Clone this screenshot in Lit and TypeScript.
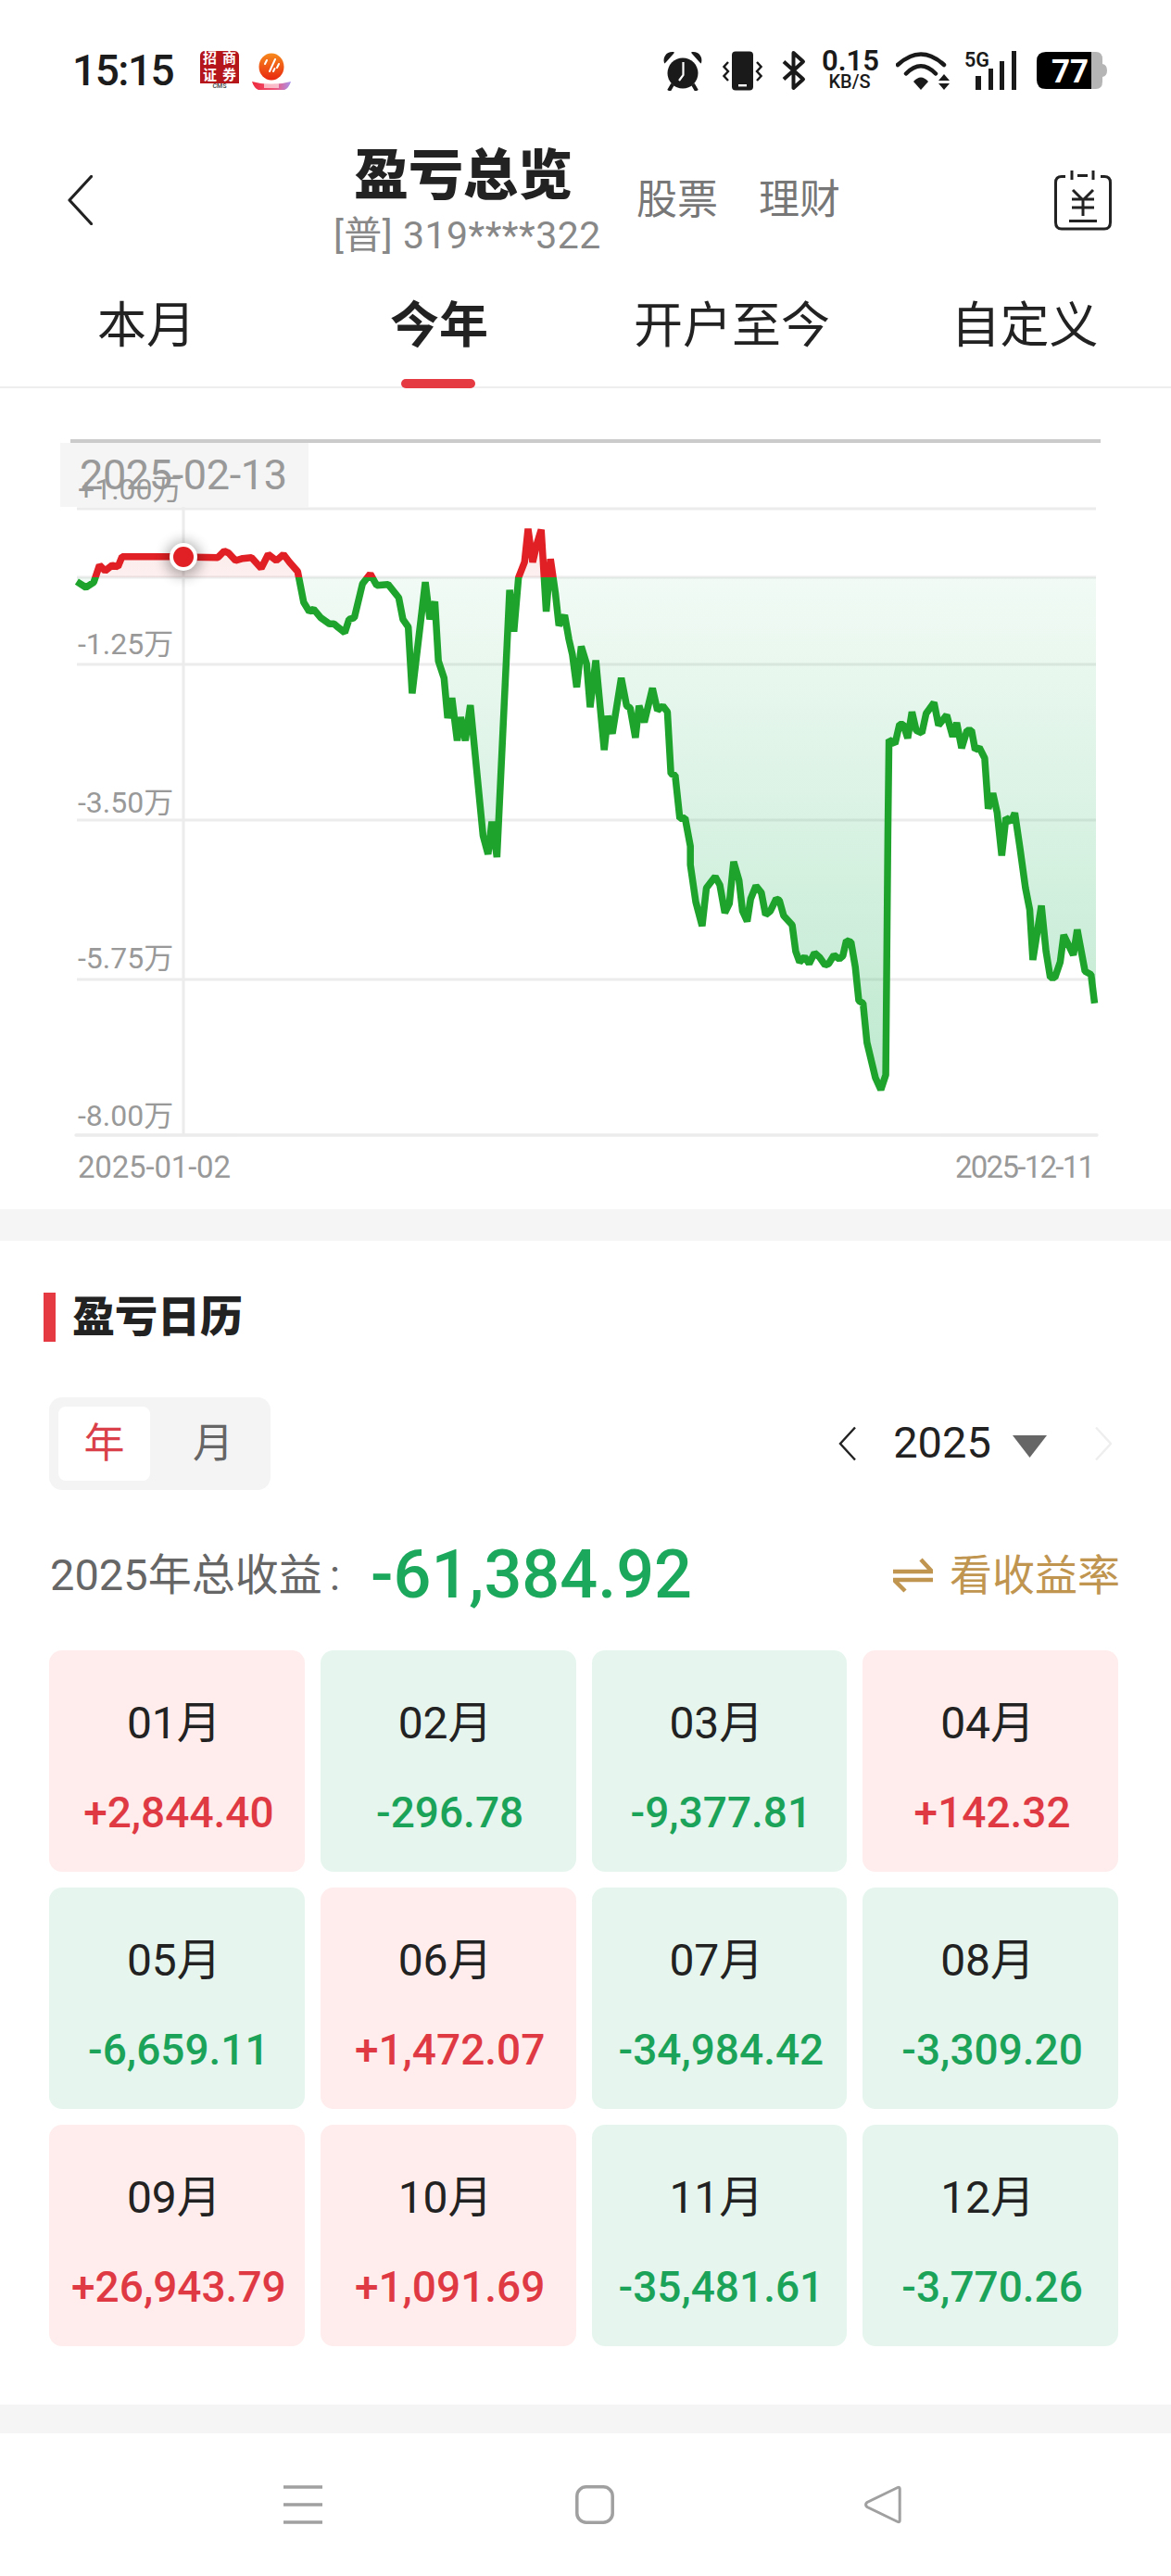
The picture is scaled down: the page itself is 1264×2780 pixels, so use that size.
import { LitElement, html, css, svg } from "lit";
import { customElement } from "lit/decorators.js";

const fromA = (l: number[][], ox: number, oy: number) =>
  l.map(([x, y]) => [+(ox + x / 2.613).toFixed(1), +(oy + y / 3).toFixed(1)]);

const POINTS = [
  ...fromA(
    [[112,503],[138,522],[160,505],[176,450],[192,468],[212,450],[228,455],[240,422],[375,422],[510,425],[528,404],[540,410],[560,435],[580,428],[605,425],[632,460],[652,415],[675,435],[695,415],[712,440],[735,470],[752,570],[768,600],[780,592],[800,620],[825,640],[838,640],[850,652],[868,668],[880,625],[895,620],[918,510],[940,478],[958,515],[990,512],[1020,555],[1032,625],[1047,650],[1058,865],[1095,505],[1108,625],[1122,568],[1132,760],[1148,815],[1158,945],[1170,880],[1185,1018],[1195,942],[1208,1018],[1222,903],[1258,1325],[1272,1385],[1283,1280],[1297,1395],[1333,530],[1345,665],[1358,490],[1375,440],[1385,332],[1398,440],[1410,380],[1422,335],[1436,600],[1448,430],[1462,540],[1472,645],[1488,612],[1500,690],[1510,740],[1522,845],[1535,713],[1550,770],[1560,910]],
    40, 460),
  ...fromA(
    [[8,758],[32,1048],[42,938],[55,995],[80,815],[95,905],[105,912],[120,1008],[130,905],[145,958],[168,848],[182,920],[197,905],[210,925],[220,1125],[232,1130],[245,1270],[260,1268],[275,1360]],
    640, 460),
  ...fromA(
    [[275,100],[290,220],[308,298],[320,175],[345,138],[358,165],[372,255],[385,225],[397,90],[412,150],[422,250],[435,283],[445,210],[460,168],[475,190],[487,262],[500,250],[517,210],[526,215],[538,265],[562,295],[572,380],[583,415],[597,398],[610,420],[625,385],[640,400],[655,425],[665,420],[680,392],[695,405],[705,395],[715,345],[728,350],[740,430],[750,540],[762,548],[773,675],[797,790],[812,828],[826,780],[832,0]],
    640, 900),
  ...fromA(
    [[835,1015],[852,1028],[865,965],[875,965],[888,1010],[900,925],[912,985],[928,993],[940,930],[962,895],[975,968],[998,935],[1015,1005],[1026,960],[1040,1042],[1055,985],[1068,985],[1078,1048],[1090,1040],[1105,1075],[1115,1238],[1128,1188],[1140,1250],[1153,1390],[1165,1268],[1180,1280],[1190,1252],[1205,1370],[1220,1495]],
    640, 460),
  ...fromA(
    [[1232,245],[1241,408],[1265,232],[1278,380],[1290,465],[1303,465],[1318,415],[1328,327],[1355,392],[1366,310],[1388,445],[1405,455],[1415,548]],
    640, 900),
];

const LINE = POINTS.map((p) => p.join(",")).join(" ");
const AREA = `M83,623 L${LINE} L1183,${POINTS[POINTS.length - 1][1]} L1183,623 Z`;

const GRID = [549, 623, 717, 885, 1057];
const AXIS = [
  { t: "+1.00万", y: 539 },
  { t: "-1.25万", y: 706 },
  { t: "-3.50万", y: 877 },
  { t: "-5.75万", y: 1045 },
  { t: "-8.00万", y: 1215 },
];

const MONTHS = [
  ["01月", "+2,844.40"], ["02月", "-296.78"], ["03月", "-9,377.81"], ["04月", "+142.32"],
  ["05月", "-6,659.11"], ["06月", "+1,472.07"], ["07月", "-34,984.42"], ["08月", "-3,309.20"],
  ["09月", "+26,943.79"], ["10月", "+1,091.69"], ["11月", "-35,481.61"], ["12月", "-3,770.26"],
];

@customElement("app-root")
export class AppRoot extends LitElement {
  static styles = css`
    :host {
      display: block;
      width: 1264px;
      height: 2780px;
      overflow: hidden;
      background: #fff;
      color: #222;
      font-family: Roboto, "Noto Sans CJK SC", sans-serif;
    }
    svg { display: block; flex: none; }
    svg text { font-family: Roboto, "Noto Sans CJK SC", sans-serif; }

    .status { height: 152px; display: flex; align-items: center; padding: 0 69px 0 78px; box-sizing: border-box; }
    .time { font-size: 46px; letter-spacing: -1.5px; font-weight: 500; color: #1c1c1c; width: 138px; line-height: 1; }
    .logo-cms { width: 42px; height: 42px; margin-right: 14px; }
    .cms-box { width: 42px; height: 35px; background: #b5161c; border-radius: 5px 5px 0 0; display: grid; grid-template-columns: 1fr 1fr; color: #fff; font-size: 15px; line-height: 17px; font-weight: 700; text-align: center; overflow: hidden; }
    .cms-foot { font-size: 7px; line-height: 7px; text-align: center; color: #555; font-weight: 700; }
    .logo-orange { width: 42px; }
    .right { margin-left: auto; display: flex; align-items: center; }
    .speed { width: 60px; margin-left: 17px; margin-right: 20px; text-align: center; color: #1a1a1a; }
    .speed b { display: block; font-size: 31px; line-height: 23px; font-weight: 600; }
    .speed i { display: block; font-size: 20px; line-height: 20px; font-weight: 500; font-style: normal; margin-top: 1px; }
    .sig { margin: -6px 0 0 16px; }
    .bat { margin: -3px 0 -3px 22px; }

    .header { height: 128px; display: flex; align-items: center; padding: 0 64px 0 73px; }
    .title-group { width: 284px; margin-left: 260px; text-align: center; }
    .title { font-size: 59px; line-height: 60px; font-weight: 900; color: #222; margin-top: 5px; white-space: nowrap; margin-left: -4px; }
    .sub { font-size: 41px; letter-spacing: 0.5px; line-height: 46px; color: #888; white-space: nowrap; margin-top: 11px; }
    .switch { margin-left: 43px; display: flex; gap: 44px; font-size: 44px; line-height: 50px; color: #777; }
    .header .doc { margin-left: auto; }

    .tabs { display: grid; grid-template-columns: repeat(4, 1fr); height: 139px; border-bottom: 2px solid #eee; box-sizing: border-box; }
    .tab { position: relative; text-align: center; padding-top: 40px; font-size: 53px; line-height: 64px; color: #222; font-weight: 400; }
    .tab.on { font-weight: 700; }
    .tab.on::after { content: ""; position: absolute; left: 117px; bottom: -2px; width: 80px; height: 10px; border-radius: 5px; background: #e63a43; }

    .gap { height: 34px; background: #f5f5f5; }
    .gap.low { height: 31px; }

    .calendar { height: 1256px; box-sizing: border-box; padding: 56px 57px 0 53px; }
    .head { display: flex; align-items: center; height: 53px; margin-left: -6px; }
    .head i { width: 13px; height: 53px; background: #e63a43; }
    .head span { margin-left: 18px; font-size: 46px; font-weight: 900; line-height: 53px; }

    .controls { margin-top: 60px; height: 100px; display: flex; justify-content: space-between; }
    .toggle { width: 239px; height: 100px; box-sizing: border-box; padding: 10px; background: #f4f4f4; border-radius: 14px; display: flex; font-size: 44px; line-height: 80px; text-align: center; }
    .toggle .sel { width: 99px; background: #fff; border-radius: 8px; color: #d9404a; }
    .toggle .off { flex: 1; color: #666; padding-left: 16px; }
    .years { display: flex; align-items: center; padding-right: 7px; height: 100px; }
    .years .val { margin-left: 39px; width: 106px; font-size: 47px; line-height: 60px; color: #222; text-align: center; margin-top: -2px; }
    .years .tri { margin-left: 23px; margin-top: 6px; }
    .years .next { margin-left: 52px; }

    .total { margin-top: 52px; height: 80px; display: flex; align-items: center; }
    .total .label { width: 346px; margin-left: 1px; font-size: 47px; line-height: 60px; color: #666; white-space: nowrap; }
    .total .label em { font-style: normal; margin-left: 8px; }
    .total .num { font-size: 72px; line-height: 80px; font-weight: 500; color: #1ca85c; white-space: nowrap; }
    .rate { margin-left: auto; margin-right: -2px; display: flex; align-items: center; font-size: 46px; line-height: 60px; color: #c09550; white-space: nowrap; }
    .rate svg { margin-right: 18px; }

    .grid { margin-top: 41px; display: grid; grid-template-columns: repeat(4, 1fr); grid-auto-rows: 239px; gap: 17px; }
    .card { border-radius: 14px; text-align: center; padding-top: 49px; box-sizing: border-box; }
    .card.up { background: #ffeded; }
    .card.down { background: #e6f6ee; }
    .card .m { font-size: 48px; line-height: 60px; color: #222; padding-right: 6px; }
    .card .v { margin-top: 41px; font-size: 46px; line-height: 50px; font-weight: 500; white-space: nowrap; padding-left: 4px; }
    .card.up .v { color: #df3a44; }
    .card.down .v { color: #1ca35a; }

    .nav { height: 154px; padding-left: 306px; display: flex; align-items: center; }
    .nav .home { margin-left: 273px; }
    .nav .back { margin-left: 270px; }
  `;

  private renderStatus() {
    return html`
      <div class="status">
        <div class="time">15:15</div>
        <div class="logo-cms">
          <div class="cms-box"><span>招</span><span>商</span><span>证</span><span>券</span></div>
          <div class="cms-foot">CMS</div>
        </div>
        <svg class="logo-orange" width="42" height="42" viewBox="0 0 42 42">
          <defs>
            <linearGradient id="og" x1="0" y1="0" x2="0" y2="1"><stop offset="0" stop-color="#f78a1c"/><stop offset="1" stop-color="#e8260f"/></linearGradient>
            <linearGradient id="pg" x1="0" y1="0" x2="1" y2="0"><stop offset="0" stop-color="#ee2a3c"/><stop offset=".6" stop-color="#f0567c"/><stop offset="1" stop-color="#a794ec"/></linearGradient>
          </defs>
          <ellipse cx="21" cy="17" rx="13.5" ry="14.5" fill="url(#og)"/>
          <path d="M14 14 l2 -4 M19 22 l6 -13 M27 18 l2 -4 M23 22 l1.5 -3" stroke="#fff" stroke-width="2" fill="none" stroke-linecap="round"/>
          <path d="M0 33 Q21 39 42 33 Q39 43 30 43 H12 Q3 43 0 33 Z" fill="url(#pg)"/>
          <rect x="13" y="35" width="16" height="5" fill="#fbd6dc" opacity=".8"/>
        </svg>
        <div class="right">
          <svg width="44" height="44" viewBox="0 0 44 44">
            <circle cx="22" cy="25" r="16.5" fill="#1a1a1a"/>
            <path d="M2 14 C0 7 5 1 12 2 C13 2 13 3 12 4 L4 13 C3 14 2 15 2 14 Z M42 14 C44 7 39 1 32 2 C31 2 31 3 32 4 L40 13 C41 14 42 15 42 14 Z" fill="#1a1a1a"/>
            <path d="M11 37 L7 44 M33 37 L37 44" stroke="#1a1a1a" stroke-width="4"/>
            <path d="M22.5 13 V27 L18 33" stroke="#fff" stroke-width="2.2" fill="none"/>
          </svg>
          <svg style="margin-left:21px" width="43" height="43" viewBox="0 0 43 43">
            <rect x="10" y="0.5" width="23" height="42" rx="4" fill="#1a1a1a"/>
            <rect x="17" y="36" width="9" height="2.4" fill="#fff"/>
            <path d="M6 12 L1.5 17 L6 22 L1.5 27 L6 32 M37 12 L41.500 17 L37 22 L41.500 27 L37 32" stroke="#1a1a1a" stroke-width="2.4" fill="none"/>
          </svg>
          <svg style="margin-left:20px" width="27" height="44" viewBox="0 0 27 44">
            <path d="M3 12.500 L24 31.500 L13.500 41 V3 L24 12.500 L3 31.500" stroke="#1a1a1a" stroke-width="4" fill="none" stroke-linejoin="round"/>
          </svg>
          <div class="speed"><b>0.15</b><i>KB/S</i></div>
          <svg width="58" height="43" viewBox="0 0 58 43">
            <path d="M2 15 Q27 -8 52 15 M11 24.500 Q27 8 43 24.500" stroke="#1a1a1a" stroke-width="4.500" fill="none" stroke-linecap="round"/>
            <path d="M19 33 Q27 24 35 33 L27 42 Z" fill="#1a1a1a"/>
            <path d="M46 32 L52 25 L58 32 Z M46 35 H58 L52 42 Z" fill="#1a1a1a"/>
          </svg>
          <svg class="sig" width="56" height="49" viewBox="0 -6 56 49">
            <text x="0" y="17" font-size="22" font-weight="600" fill="#1a1a1a" textLength="27" lengthAdjust="spacingAndGlyphs">5G</text>
            <path d="M12 27 h6 v15 h-6 Z M26 19 h5 v23 h-5 Z M38 11 h5 v31 h-5 Z M51 0 h5 v42 h-5 Z" fill="#1a1a1a"/>
          </svg>
          <svg class="bat" width="76" height="46" viewBox="0 -3 76 46">
            <path d="M59 0 H64 Q71 0 71 8 V32 Q71 40 64 40 H59 Z M71 13 Q76 14 76 20 Q76 26 71 27 Z" fill="#b5b5b5"/>
            <path d="M10 0 H59 V40 H10 Q0 40 0 30 V10 Q0 0 10 0 Z" fill="#000"/>
            <text x="36" y="33" font-size="35" font-weight="700" fill="#fff" text-anchor="middle">77</text>
          </svg>
        </div>
      </div>`;
  }

  private renderHeader() {
    return html`
      <div class="header">
        <svg width="27" height="54" viewBox="0 0 27 54">
          <path d="M25.500 1.500 L2 27 L25.500 52.500" stroke="#222" stroke-width="3.200" fill="none" stroke-linecap="round" stroke-linejoin="round"/>
        </svg>
        <div class="title-group">
          <div class="title">盈亏总览</div>
          <div class="sub">[普] 319****322</div>
        </div>
        <div class="switch"><span>股票</span><span>理财</span></div>
        <svg class="doc" width="62" height="65" viewBox="0 0 62 65">
          <path d="M12 6.500 H8 Q1.500 6.500 1.500 13 V56 Q1.500 63 8 63 H54 Q60.500 63 60.500 56 V13 Q60.500 6.500 54 6.500 H50" stroke="#222" stroke-width="3" fill="none"/>
          <path d="M19 0 V10 M42 0 V10 M25 5.500 H36 M20 21 L31 32 L42 21 M19 31 H43 M19 40 H43 M31 32 V49 M16 54.500 H46" stroke="#222" stroke-width="3" fill="none"/>
        </svg>
      </div>`;
  }

  private renderChart() {
    return html`
      <svg width="1264" height="886" viewBox="0 419 1264 886">
        <defs>
          <linearGradient id="gfill" gradientUnits="userSpaceOnUse" x1="0" y1="623" x2="0" y2="1190">
            <stop offset="0" stop-color="#22b45c" stop-opacity=".06"/>
            <stop offset="1" stop-color="#22b45c" stop-opacity=".3"/>
          </linearGradient>
          <linearGradient id="rfill" gradientUnits="userSpaceOnUse" x1="0" y1="560" x2="0" y2="623">
            <stop offset="0" stop-color="#e02020" stop-opacity=".1"/>
            <stop offset="1" stop-color="#e02020" stop-opacity=".07"/>
          </linearGradient>
          <clipPath id="above"><rect x="0" y="419" width="1264" height="204"/></clipPath>
          <clipPath id="below"><rect x="0" y="623" width="1264" height="680"/></clipPath>
          <filter id="glow" x="-100%" y="-100%" width="300%" height="300%"><feGaussianBlur stdDeviation="7"/></filter>
        </defs>
        ${svg`
          <line x1="76" y1="476" x2="1188" y2="476" stroke="#cbcbcb" stroke-width="4"/>
          ${GRID.map((y) => svg`<line x1="83" y1=${y} x2="1183" y2=${y} stroke="#ececec" stroke-width="3"/>`)}
          <line x1="82" y1="1225" x2="1184" y2="1225" stroke="#ececec" stroke-width="3.500" stroke-linecap="round"/>
          <line x1="198" y1="547" x2="198" y2="1225" stroke="#ececec" stroke-width="3"/>
          <rect x="65" y="478" width="268" height="69" fill="#f5f5f5"/>
          <path d=${AREA} fill="url(#rfill)" clip-path="url(#above)"/>
          <path d=${AREA} fill="url(#gfill)" clip-path="url(#below)"/>
          <polyline points=${LINE} fill="none" stroke="#e02024" stroke-width="7.500" stroke-linejoin="bevel" clip-path="url(#above)"/>
          <polyline points=${LINE} fill="none" stroke="#1ea32c" stroke-width="7.500" stroke-linejoin="bevel" clip-path="url(#below)"/>
          <circle cx="198" cy="603" r="19" fill="#000" opacity=".3" filter="url(#glow)"/>
          <circle cx="198" cy="601" r="15" fill="#fff"/>
          <circle cx="198" cy="601" r="11" fill="#e02024"/>
          ${AXIS.map((a) => svg`<text x="84" y=${a.y} font-size="32" fill="#999">${a.t}</text>`)}
          <text x="86" y="528" font-size="45" fill="#999" textLength="224">2025-02-13</text>
          <text x="84" y="1271" font-size="33" fill="#999" textLength="165">2025-01-02</text>
          <text x="1031" y="1271" font-size="33" fill="#999" textLength="151">2025-12-11</text>
        `}
      </svg>`;
  }

  private renderCalendar() {
    return html`
      <div class="calendar">
        <div class="head"><i></i><span>盈亏日历</span></div>
        <div class="controls">
          <div class="toggle"><div class="sel">年</div><div class="off">月</div></div>
          <div class="years">
            <svg width="20" height="38" viewBox="0 0 20 38"><path d="M18 1.500 L2 19 L18 36.500" stroke="#222" stroke-width="2.400" fill="none"/></svg>
            <div class="val">2025</div>
            <svg class="tri" width="37" height="24" viewBox="0 0 37 24"><path d="M0 0 H37 L18.500 24 Z" fill="#666"/></svg>
            <svg class="next" width="18" height="38" viewBox="0 0 18 38"><path d="M1 1.500 L17 19 L1 36.500" stroke="#eee" stroke-width="2.400" fill="none"/></svg>
          </div>
        </div>
        <div class="total">
          <div class="label">2025年总收益<em>:</em></div>
          <div class="num">-61,384.92</div>
          <div class="rate">
            <svg width="43" height="38" viewBox="0 0 43 38"><path d="M0 15 H42 L30 2 M43 24 H1 L13 36" stroke="#c09550" stroke-width="4.500" fill="none"/></svg>
            看收益率
          </div>
        </div>
        <div class="grid">
          ${MONTHS.map(([m, v]) => html`
            <div class="card ${v.startsWith("+") ? "up" : "down"}">
              <div class="m">${m}</div>
              <div class="v">${v}</div>
            </div>`)}
        </div>
      </div>`;
  }

  render() {
    return html`
      ${this.renderStatus()}
      ${this.renderHeader()}
      <div class="tabs">
        <div class="tab">本月</div>
        <div class="tab on">今年</div>
        <div class="tab">开户至今</div>
        <div class="tab">自定义</div>
      </div>
      ${this.renderChart()}
      <div class="gap"></div>
      ${this.renderCalendar()}
      <div class="gap low"></div>
      <div class="nav">
        <svg width="42" height="42" viewBox="0 0 42 42"><path d="M0 2 H42 M0 21 H42 M0 40 H42" stroke="#a0a0a0" stroke-width="3.500"/></svg>
        <svg class="home" width="42" height="42" viewBox="0 0 42 42"><rect x="1.800" y="1.800" width="38.400" height="38.400" rx="10" fill="none" stroke="#a0a0a0" stroke-width="3.500"/></svg>
        <svg class="back" width="40" height="42" viewBox="0 0 40 42"><path d="M36 2.500 Q38.200 1.500 38.200 4 V38 Q38.200 40.500 36 39.500 L3 23.500 Q0 21 3 18.500 Z" fill="none" stroke="#a0a0a0" stroke-width="3"/></svg>
      </div>
    `;
  }
}
